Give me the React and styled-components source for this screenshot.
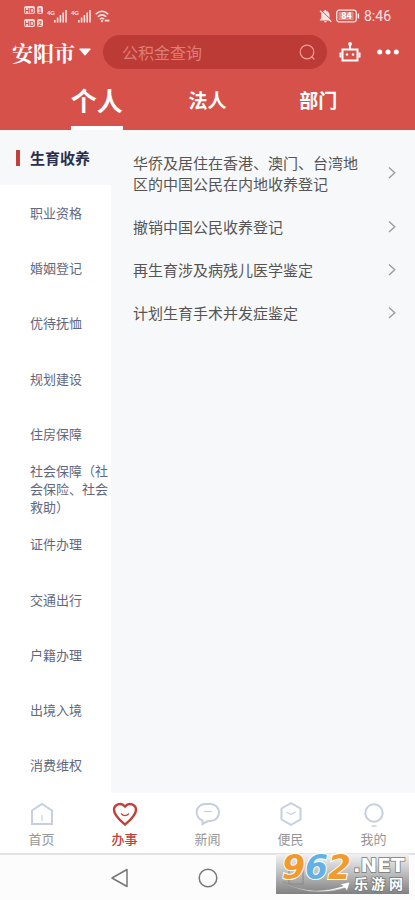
import { useState } from "react";
import styled, { createGlobalStyle } from "styled-components";

const GlobalStyle = createGlobalStyle`
  :root {
    --header-color: #d7514b;
    --search-color: #bd3b36;
    --active-color: #c2403a;
    --page-color: #f7f8fa;
    --text-color: #555;
    --side-color: #5f6880;
    --side-active-color: #2a2e4e;
    --icon-color: #c6cfde;
    --label-color: #969696;
  }
  * {
    box-sizing: border-box;
  }
  body {
    margin: 0;
    background: var(--page-color);
  }
  button {
    border: 0;
    padding: 0;
    background: none;
    color: inherit;
    font: inherit;
    cursor: pointer;
  }
  ul {
    list-style: none;
    margin: 0;
    padding: 0;
  }
  svg {
    display: block;
    flex: none;
  }
`;

const Page = styled.div`
  min-height: 100vh;
  display: flex;
  flex-direction: column;
  font-family: "Noto Sans CJK SC", sans-serif;
`;

const Header = styled.header`
  background: var(--header-color);
  color: #fff;
`;

const StatusBar = styled.div`
  height: 32px;
  padding: 0 24px;
  display: flex;
  justify-content: space-between;
  align-items: center;
`;

const StatusGroup = styled.div`
  display: flex;
  align-items: center;
  gap: 4px;
`;

const Clock = styled.time`
  font-family: Roboto, sans-serif;
  font-size: 14px;
  line-height: 16px;
  color: #fbe3e1;
`;

const SearchRow = styled.div`
  height: 40px;
  padding: 0 16px 0 12px;
  display: flex;
  align-items: center;
  gap: 12px;
`;

const Actions = styled.div`
  display: flex;
  align-items: center;
  gap: 16px;
`;

const CityButton = styled.button`
  display: flex;
  align-items: center;
  gap: 4px;
  font-family: "Noto Serif CJK SC", "Noto Sans CJK SC", serif;
  font-size: 21px;
  font-weight: 700;
  line-height: 32px;
`;

const SearchBox = styled.form`
  flex: 1;
  min-width: 0;
  height: 34px;
  padding: 0 11px 0 19px;
  display: flex;
  align-items: center;
  border-radius: 17px;
  background: var(--search-color);
`;

const SearchInput = styled.input`
  flex: 1;
  min-width: 0;
  border: 0;
  padding: 0;
  outline: none;
  background: none;
  color: #fff;
  font-family: inherit;
  font-size: 16px;
  line-height: 24px;
  &::placeholder {
    color: #dd7d77;
    opacity: 1;
  }
`;

const Tabs = styled.nav`
  height: 58px;
  padding: 0 10%;
  display: grid;
  grid-template-columns: repeat(3, 1fr);
  justify-items: center;
`;

const Tab = styled.button`
  border-top: 2px solid transparent;
  border-bottom: 4px solid ${(props) => (props.$active ? "#fff" : "transparent")};
  font-size: ${(props) => (props.$active ? "26px" : "19px")};
  font-weight: 700;
  line-height: 32px;
`;

const Body = styled.main`
  flex: 1;
  display: flex;
`;

const Sidebar = styled.aside`
  width: 111px;
  flex: none;
  display: flex;
  background: #fff;
`;

const SideList = styled.ul`
  flex: 1;
  display: grid;
  grid-auto-rows: 1fr;
`;

const SideButton = styled.button`
  width: 100%;
  height: 100%;
  min-height: 55px;
  padding-left: ${(props) => (props.$active ? "16px" : "30px")};
  display: flex;
  align-items: center;
  gap: 10px;
  text-align: left;
  background: ${(props) => (props.$active ? "var(--page-color)" : "#fff")};
  color: ${(props) => (props.$active ? "var(--side-active-color)" : "var(--side-color)")};
  font-size: ${(props) => (props.$active ? "15px" : "13px")};
  font-weight: ${(props) => (props.$active ? 700 : 400)};
  line-height: 18px;
`;

const Marker = styled.span`
  width: 4px;
  height: 16px;
  background: var(--active-color);
`;

const Services = styled.ul`
  flex: 1;
  min-width: 0;
  padding: 11px 19px 11px 22px;
  background: var(--page-color);
`;

const ServiceLink = styled.a`
  padding: 11px 0;
  display: flex;
  align-items: center;
  justify-content: space-between;
  gap: 24px;
  color: var(--text-color);
  font-size: 15px;
  line-height: 21px;
  text-decoration: none;
`;

const BottomNav = styled.nav`
  height: 62px;
  display: grid;
  grid-template-columns: repeat(5, 1fr);
  background: #fff;
  border-bottom: 2px solid #e2e2e2;
`;

const NavLink = styled.a`
  padding-top: 8px;
  display: flex;
  flex-direction: column;
  align-items: center;
  gap: 2px;
  color: ${(props) => (props.$active ? "var(--active-color)" : "var(--label-color)")};
  font-size: 13px;
  font-weight: ${(props) => (props.$active ? 500 : 400)};
  line-height: 20px;
  text-decoration: none;
  svg {
    color: ${(props) => (props.$active ? "var(--active-color)" : "var(--icon-color)")};
  }
`;

const SystemNav = styled.div`
  position: relative;
  height: 45px;
  display: grid;
  grid-template-columns: repeat(3, 88px);
  justify-content: center;
  justify-items: center;
  align-items: center;
  background: #fcfcfc;
  color: #777;
`;

const Watermark = styled.svg`
  position: absolute;
  right: 6px;
  bottom: 6px;
`;

function HdBadges() {
  return (
    <svg width="19" height="23" viewBox="0 0 19 23" fontFamily="Liberation Sans, sans-serif" fontWeight="700" fontSize="7">
      <rect x="0" y="1" width="11" height="8" rx="2" fill="#f8d9d7" />
      <rect x="13" y="1" width="6" height="8" rx="2" fill="#f8d9d7" />
      <rect x="0" y="14" width="11" height="8" rx="2" fill="#f8d9d7" />
      <rect x="13" y="14" width="6" height="8" rx="2" fill="#f8d9d7" />
      <g fill="#d7514b" textAnchor="middle">
        <text x="5.5" y="7.5">HD</text>
        <text x="16" y="7.5">1</text>
        <text x="5.5" y="20.5">HD</text>
        <text x="16" y="20.5">2</text>
      </g>
    </svg>
  );
}

function Signal() {
  return (
    <svg width="20" height="14" viewBox="0 0 20 14" fill="#fbe3e1">
      <text x="0" y="6" fontFamily="Liberation Sans, sans-serif" fontWeight="700" fontSize="6">4G</text>
      <rect x="7" y="11" width="1.6" height="2.5" />
      <rect x="9.8" y="8.5" width="1.6" height="5" />
      <rect x="12.6" y="6" width="1.6" height="7.5" />
      <rect x="15.4" y="3.5" width="1.6" height="10" />
      <rect x="18.2" y="1" width="1.6" height="12.5" />
    </svg>
  );
}

function Wifi() {
  return (
    <svg width="15" height="13" viewBox="0 0 15 13" fill="none" stroke="#fbe3e1" strokeWidth="1.5">
      <path d="M.7 4.2Q7 -1.6 13.3 4.2M2.8 6.8Q7 3 11.2 6.8M4.8 9.2Q7 7.2 9.2 9.2" />
      <circle cx="7" cy="11.2" r="1.1" fill="#fbe3e1" stroke="none" />
      <path d="M9.8 10.6h4.6" strokeWidth="1.8" />
    </svg>
  );
}

function BellOff() {
  return (
    <svg width="13" height="14" viewBox="0 0 13 14">
      <path d="M6.3 1c.7 0 1 .4 1 1 2 .5 3.2 2 3.2 4v3l1.6 2.400H.6L2.200 9V6c0-2 1-3.500 3.100-4 0-.6.3-1 1-1zM5 12h2.800a1.400 1.400 0 0 1-2.800 0z" fill="#fbe3e1" />
      <path d="M2 1l10.800 10.600" stroke="#d7514b" strokeWidth="1" />
      <path d="M1 1.800l11.300 11" stroke="#fbe3e1" strokeWidth="1.200" />
    </svg>
  );
}

function Battery() {
  return (
    <svg width="24" height="14" viewBox="0 0 24 14">
      <rect x=".7" y="1.200" width="19.600" height="11.600" rx="2.500" fill="none" stroke="#fbe3e1" strokeWidth="1.300" />
      <rect x="2.500" y="3" width="15" height="8" fill="#e88a85" />
      <rect x="21.600" y="4.500" width="1.500" height="5" fill="#fbe3e1" />
      <text x="10.500" y="10.300" textAnchor="middle" fill="#fff" fontFamily="Roboto, sans-serif" fontWeight="700" fontSize="9">84</text>
    </svg>
  );
}

function Robot() {
  return (
    <svg width="22" height="20" viewBox="0 0 22 20" fill="none" stroke="#fff" strokeWidth="2">
      <rect x="3.500" y="7.500" width="15" height="11" />
      <path d="M11 7V3M1.500 10.500v5M20.500 10.500v5" />
      <circle cx="11" cy="2" r="1.900" fill="#fff" stroke="none" />
      <circle cx="8" cy="12.500" r="1.200" fill="#fff" stroke="none" />
      <circle cx="14" cy="12.500" r="1.200" fill="#fff" stroke="none" />
    </svg>
  );
}

function Dots() {
  return (
    <svg width="22" height="6" viewBox="0 0 22 6" fill="#fff">
      <circle cx="2.700" cy="3" r="2.500" />
      <circle cx="11" cy="3" r="2.500" />
      <circle cx="19.300" cy="3" r="2.500" />
    </svg>
  );
}

function SearchIcon() {
  return (
    <svg width="17" height="17" viewBox="0 0 17 17" fill="none" stroke="#f0a09b" strokeWidth="1.200">
      <circle cx="8" cy="8" r="6.800" />
      <path d="M12.800 12.800l2.200 2.200" strokeLinecap="round" />
    </svg>
  );
}

function Chevron() {
  return (
    <svg width="8" height="14" viewBox="0 0 8 14" fill="none" stroke="#999" strokeWidth="1.300">
      <path d="M1 1.500L6.800 6.700 1 12" />
    </svg>
  );
}

function NavIcon({ children }) {
  return (
    <svg width="26" height="26" viewBox="0 0 26 26" fill="none" stroke="currentColor" strokeWidth="2">
      {children}
    </svg>
  );
}

const categories = [
  "生育收养",
  "职业资格",
  "婚姻登记",
  "优待抚恤",
  "规划建设",
  "住房保障",
  "社会保障（社会保险、社会救助）",
  "证件办理",
  "交通出行",
  "户籍办理",
  "出境入境",
  "消费维权",
];

const services = [
  "华侨及居住在香港、澳门、台湾地区的中国公民在内地收养登记",
  "撤销中国公民收养登记",
  "再生育涉及病残儿医学鉴定",
  "计划生育手术并发症鉴定",
];

const navItems = [
  {
    label: "首页",
    icon: (
      <>
        <path d="M3 23V9.500L13 3l10 6.500V23z" />
        <path d="M13 14v6" strokeWidth="1.200" />
      </>
    ),
  },
  {
    label: "办事",
    icon: (
      <>
        <path d="M13 23.500C9 20 2 15 2 8.800 2 3.500 9 .5 13 5.600 17 .5 24 3.500 24 8.800 24 15 17 20 13 23.500z" strokeWidth="2.400" />
        <path d="M9 12.500q4 4.200 8 0" strokeWidth="1.200" />
      </>
    ),
  },
  {
    label: "新闻",
    icon: (
      <>
        <path d="M10.500 3h5a8.300 8.300 0 0 1 0 17H13l-5.500 3v-3.600A8.400 8.400 0 0 1 10.500 3z" />
        <path d="M9 10.500h8" strokeWidth="1.200" />
      </>
    ),
  },
  {
    label: "便民",
    icon: (
      <>
        <path d="M13 2.200l9.500 5.300v11L13 23.800l-9.500-5.300v-11z" />
        <path d="M8.500 11l4.500 2.500 4.500-2.500" strokeWidth="1.200" />
      </>
    ),
  },
  {
    label: "我的",
    icon: (
      <>
        <circle cx="13" cy="12" r="8.700" />
        <path d="M10.500 25h5" strokeWidth="1.500" />
      </>
    ),
  },
];

function SiteMark() {
  return (
    <Watermark width="133" height="50" viewBox="0 -10 133 50">
      <defs>
        <linearGradient id="shade" x1="0" y1="0" x2="0" y2="1">
          <stop offset="0" stopColor="#f2f2f2" />
          <stop offset="0.5" stopColor="#bcbcbc" />
          <stop offset="1" stopColor="#808080" />
        </linearGradient>
      </defs>
      <rect width="133" height="40" fill="url(#shade)" />
      <rect x="13" y="16" width="14" height="14" fill="none" stroke="#888" />
      <path d="M7 28q28 15 60 4l-3-2 10-2-3 9-2-3Q33 44 7 28z" fill="#fff" stroke="#888" strokeWidth=".5" />
      <g fontFamily="DejaVu Sans, sans-serif" fontWeight="700" stroke="#fff" paintOrder="stroke">
        <g fontSize="33" fontStyle="italic" strokeWidth="2">
          <text x="6" y="25" fill="#f39a2e">9</text>
          <text x="29" y="25" fill="#62b1e4">6</text>
          <text x="52" y="25" fill="#f39a2e">2</text>
        </g>
        <text x="77" y="18" fontSize="20" fill="#fff" stroke="#777" strokeWidth="1.500">.NET</text>
      </g>
      <g fontFamily="Noto Sans CJK SC, sans-serif" fontWeight="700" fontSize="14" fill="#fff" stroke="#777" strokeWidth="1.500" paintOrder="stroke">
        <text x="78" y="35">乐</text>
        <text x="95" y="35">游</text>
        <text x="113" y="35">网</text>
      </g>
    </Watermark>
  );
}

export default function App() {
  const [tab, setTab] = useState("个人");
  const [category, setCategory] = useState(categories[0]);

  return (
    <Page>
      <GlobalStyle />
      <Header>
        <StatusBar>
          <StatusGroup>
            <HdBadges />
            <Signal />
            <Signal />
            <Wifi />
          </StatusGroup>
          <StatusGroup>
            <BellOff />
            <Battery />
            <Clock>8:46</Clock>
          </StatusGroup>
        </StatusBar>
        <SearchRow>
          <CityButton>
            安阳市
            <svg width="12" height="8" viewBox="0 0 12 8" fill="#fff">
              <path d="M1 .5h10q1 0 .4.900L6.800 7q-.8.800-1.600 0L.6 1.400Q0 .5 1 .5z" />
            </svg>
          </CityButton>
          <SearchBox onSubmit={(e) => e.preventDefault()}>
            <SearchInput placeholder="公积金查询" aria-label="公积金查询" />
            <button aria-label="搜索">
              <SearchIcon />
            </button>
          </SearchBox>
          <Actions>
            <button aria-label="智能客服">
              <Robot />
            </button>
            <button aria-label="更多">
              <Dots />
            </button>
          </Actions>
        </SearchRow>
        <Tabs>
          {["个人", "法人", "部门"].map((name) => (
            <Tab key={name} $active={name === tab} onClick={() => setTab(name)}>
              {name}
            </Tab>
          ))}
        </Tabs>
      </Header>
      <Body>
        <Sidebar>
          <SideList>
            {categories.map((name) => (
              <li key={name}>
                <SideButton $active={name === category} onClick={() => setCategory(name)}>
                  {name === category && <Marker />}
                  {name}
                </SideButton>
              </li>
            ))}
          </SideList>
        </Sidebar>
        <Services>
          {services.map((name) => (
            <li key={name}>
              <ServiceLink href="#">
                {name}
                <Chevron />
              </ServiceLink>
            </li>
          ))}
        </Services>
      </Body>
      <BottomNav>
        {navItems.map((item) => (
          <NavLink key={item.label} href="#" $active={item.label === "办事"}>
            <NavIcon>{item.icon}</NavIcon>
            {item.label}
          </NavLink>
        ))}
      </BottomNav>
      <SystemNav>
        <button aria-label="返回">
          <svg width="20" height="20" viewBox="0 0 20 20" fill="none" stroke="currentColor" strokeWidth="1.500">
            <path d="M17 1.500v17L2 10z" strokeLinejoin="round" />
          </svg>
        </button>
        <button aria-label="主屏幕">
          <svg width="20" height="20" viewBox="0 0 20 20" fill="none" stroke="currentColor" strokeWidth="1.500">
            <circle cx="10" cy="10" r="8.800" />
          </svg>
        </button>
        <SiteMark />
      </SystemNav>
    </Page>
  );
}
